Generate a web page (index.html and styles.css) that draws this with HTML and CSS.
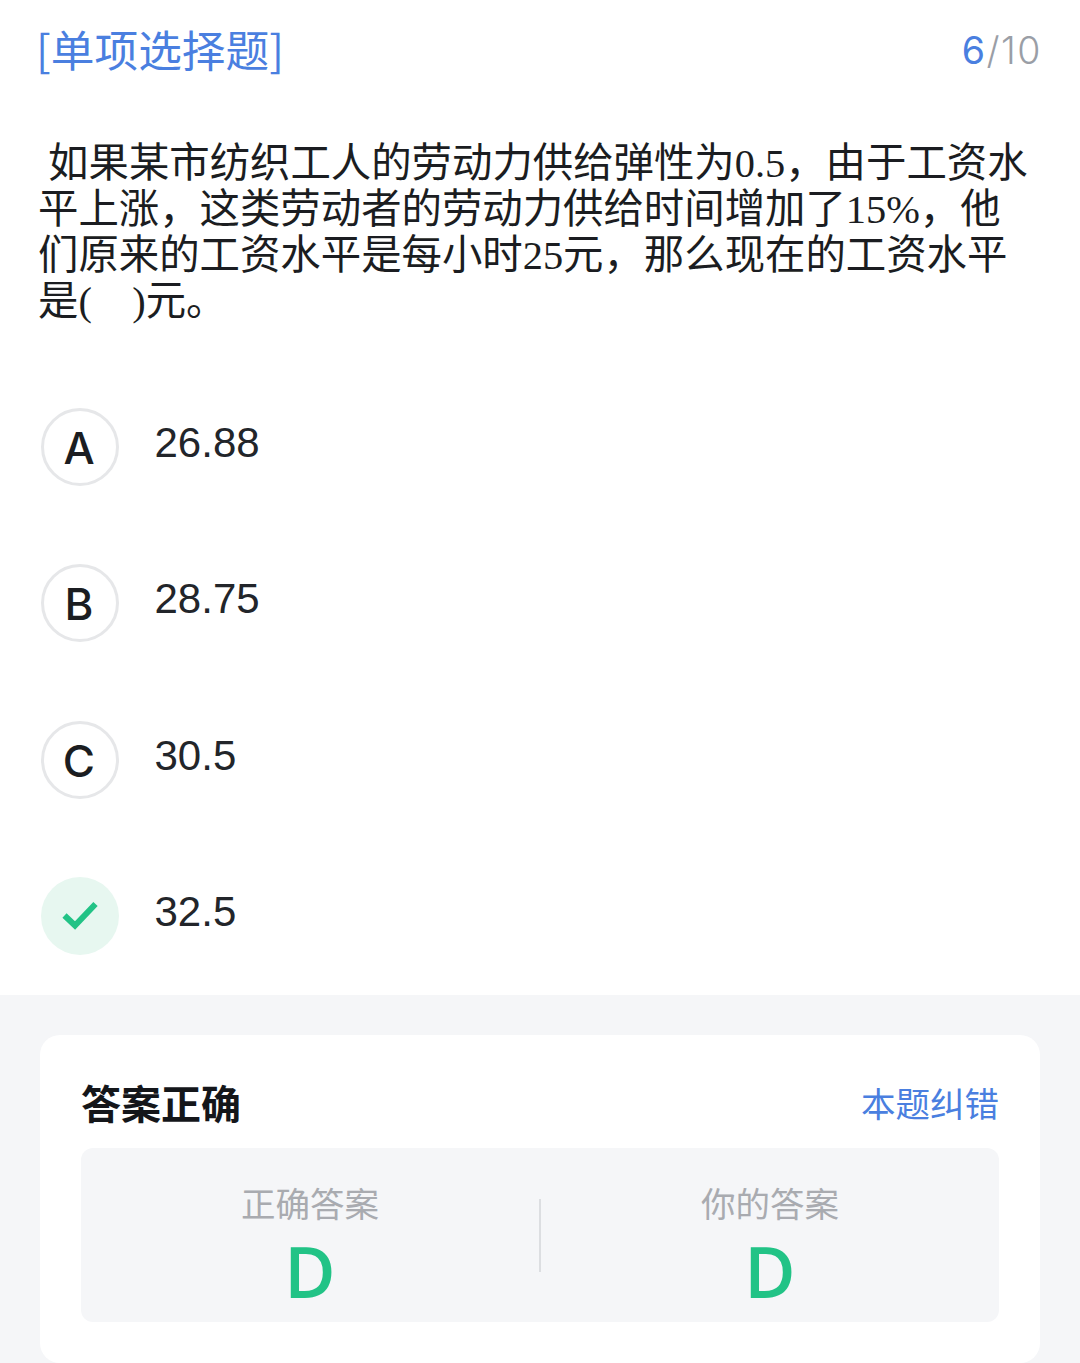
FILE: index.html
```html
<!DOCTYPE html>
<html lang="zh-CN">

<head>
    <meta charset="UTF-8" />
    <meta name="viewport" content="width=device-width, initial-scale=1.0" />
    <title>单项选择题</title>
    <link rel="stylesheet" href="styles.css">
</head>

<body>

    <header class="quiz__head">
        <span class="quiz__type">[单项选择题]</span>
        <span class="quiz__count"><b>6</b><i>/</i>10</span>
    </header>

    <p class="quiz__question">&nbsp;如果某市纺织工人的劳动力供给弹性为0.5，由于工资水平上涨，这类劳动者的劳动力供给时间增加了15%，他们原来的工资水平是每小时25元，那么现在的工资水平是(&nbsp;&nbsp;&nbsp;&nbsp;)元。</p>

    <ol class="quiz__options">
        <li class="quiz__option">
            <span class="quiz__mark">A</span>
            <span class="quiz__text">26.88</span>
        </li>
        <li class="quiz__option">
            <span class="quiz__mark">B</span>
            <span class="quiz__text">28.75</span>
        </li>
        <li class="quiz__option">
            <span class="quiz__mark">C</span>
            <span class="quiz__text">30.5</span>
        </li>
        <li class="quiz__option">
            <span class="quiz__mark quiz__mark--right">
                <svg width="36" height="30" viewBox="0 0 36 30">
                    <path d="M2.5 14.5 L13 24.5 L33.5 3" fill="none" stroke="#22c386" stroke-width="6" />
                </svg>
            </span>
            <span class="quiz__text">32.5</span>
        </li>
    </ol>

    <section class="result">
        <div class="result__card">
            <div class="result__top">
                <h3 class="result__title">答案正确</h3>
                <span class="result__report">本题纠错</span>
            </div>
            <div class="result__box">
                <div class="result__col">
                    <span class="result__label">正确答案</span>
                    <span class="result__value">D</span>
                </div>
                <div class="result__line"></div>
                <div class="result__col">
                    <span class="result__label">你的答案</span>
                    <span class="result__value">D</span>
                </div>
            </div>
        </div>
    </section>

</body>

</html>
```

FILE: styles.css
```css
html,
body {
    height: 1363px;
    overflow: hidden;
}

body {
    margin: 0;
    background: #fff;
    font-family: "Liberation Sans", "Noto Sans CJK SC", sans-serif;
}

.quiz__head {
    display: flex;
    justify-content: space-between;
    align-items: center;
    height: 100px;
    padding: 0 38px 0 36px;
}

.quiz__type {
    font-family: "Noto Sans CJK SC", sans-serif;
    font-size: 43.7px;
    line-height: 96px;
    margin-bottom: 4px;
    color: #4a7fe0;
}

.quiz__count {
    font-family: Inter, sans-serif;
    font-size: 37.5px;
    font-weight: 300;
    letter-spacing: 1.5px;
    color: #9a9ea6;
}

.quiz__count b {
    font-weight: 400;
    color: #4a7fe0;
}

.quiz__count i {
    font-style: normal;
}

.quiz__question {
    margin: 41px 0 0;
    padding: 0 50px 0 38px;
    font-family: "Liberation Serif", "Noto Sans CJK SC", serif;
    font-size: 40.4px;
    line-height: 46px;
    color: #1b1d21;
}

.quiz__options {
    list-style: none;
    margin: 83px 0 0;
    padding: 0 0 0 41px;
}

.quiz__option {
    display: flex;
    gap: 36px;
    height: 156.3px;
}

.quiz__mark {
    flex: none;
    display: flex;
    align-items: center;
    justify-content: center;
    box-sizing: border-box;
    width: 78px;
    height: 78px;
    padding: 2px 2px 0 0;
    border: 3px solid #e6e7e9;
    border-radius: 50%;
    font-family: Inter, sans-serif;
    font-size: 44px;
    font-weight: 500;
    color: #1b1d21;
}

.quiz__mark--right {
    padding: 0 1px 0 0;
    border: 0;
    background: #e7f7f0;
}

.quiz__text {
    font-size: 42px;
    line-height: 70px;
    margin-left: -0.5px;
    color: #22252a;
}

.result {
    position: absolute;
    top: 995px;
    left: 0;
    right: 0;
    bottom: 0;
    box-sizing: border-box;
    padding: 40px 40px 0;
    background: #f5f6f8;
}

.result__card {
    box-sizing: border-box;
    height: 328px;
    padding: 41px;
    background: #fff;
    border-radius: 20px;
}

.result__top {
    display: flex;
    justify-content: space-between;
    align-items: center;
    height: 52px;
    margin-bottom: 20px;
}

.result__title {
    margin: 0;
    font-size: 40px;
    font-weight: bold;
    color: #14161a;
}

.result__report {
    font-size: 34.5px;
    color: #4a7fe0;
}

.result__box {
    display: flex;
    align-items: center;
    height: 174px;
    background: #f5f6f8;
    border-radius: 12px;
}

.result__col {
    flex: 1;
    display: flex;
    flex-direction: column;
    align-items: center;
    padding-top: 21px;
}

.result__label {
    font-size: 34.5px;
    line-height: 50px;
    color: #a9abb0;
}

.result__value {
    font-family: "Open Sans", sans-serif;
    font-size: 70px;
    font-weight: 600;
    line-height: 82px;
    color: #22c386;
}

.result__line {
    flex: none;
    width: 2px;
    height: 73px;
    background: #dcdee1;
}
```
